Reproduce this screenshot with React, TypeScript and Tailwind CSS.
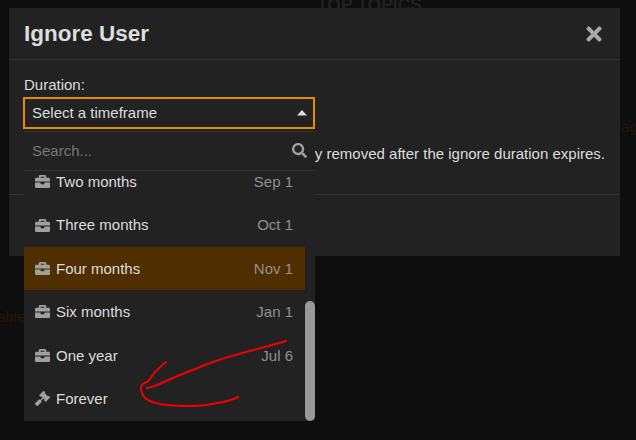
import { FaBriefcase, FaGavel, FaSearch, FaTimes } from "react-icons/fa";

const rows = [
  { label: "Two months", date: "Sep 1" },
  { label: "Three months", date: "Oct 1" },
  { label: "Four months", date: "Nov 1", active: true },
  { label: "Six months", date: "Jan 1" },
  { label: "One year", date: "Jul 6" },
  { label: "Forever", date: "", gavel: true },
];

export default function App() {
  return (
    <div className="relative w-[636px] h-[440px] overflow-hidden bg-[#0e0e0e] pt-2 pl-[9px] font-['Liberation_Sans',Arial,sans-serif] text-[#dddddd]">
      <div className="absolute left-[317px] top-[-8px] text-[17.5px] text-[#212121] font-bold">TOP TOPICS</div>
      <div className="absolute left-[618px] top-[116px] text-[15px] text-[#24170c]">lag</div>
      <div className="absolute left-[-3px] top-[306px] text-[15px] text-[#24170c]">able</div>

      <div className="relative w-[611px] h-[248px] bg-[#222222] flex flex-col">
        <div className="h-[52px] border-b border-[#333333] flex items-center justify-between pl-[15px] pr-[15px] shrink-0">
          <h1 className="text-[22.5px] font-bold text-[#dddddd]">Ignore User</h1>
          <FaTimes className="text-[#a8a8a8] w-[22px] h-[22px]" />
        </div>
        <div className="h-[135px] border-b border-[#333333] pt-4 px-[15px] shrink-0">
          <div className="text-[15px] leading-[18px]">Duration:</div>
          <div className="flex justify-end whitespace-nowrap text-[15px] leading-[18px] mt-[51px]">
            Automatically removed after the ignore duration expires.
          </div>
        </div>
      </div>

      <div className="absolute left-[23px] top-[97px] w-[292px] h-[32px] border-2 border-[#e68a00] bg-[#222222] flex items-center justify-between pl-[7px] pr-[6px] text-[15px]">
        <span className="pt-[1px]">Select a timeframe</span>
        <svg width="10" height="6" viewBox="0 0 10 6" className="fill-[#dddddd]"><path d="M5 0 L10 5.5 L0 5.5 Z" /></svg>
      </div>

      <div className="absolute left-[24px] top-[131px] w-[291px] h-[290px] bg-[#222222] flex flex-col overflow-hidden">
        <div className="h-[40px] border-y border-[#333333] flex items-center justify-between pl-2 pr-2 shrink-0">
          <span className="text-[15px] text-[#777777] pt-[1px]">Search...</span>
          <FaSearch className="text-[#a0a0a0] w-[15px] h-[15px] -mt-0.5" />
        </div>
        <div className="relative flex-1 overflow-hidden pr-[10px]">
          <div className="-mt-[11px]">
            {rows.map((r) => (
              <div
                key={r.label}
                className={`h-[43.4px] flex items-center justify-between pl-[11px] pr-[12px] ${r.active ? "bg-[#4f2e00]" : ""}`}
              >
                <span className="flex items-center gap-[6px] text-[15px]">
                  {r.gavel ? (
                    <FaGavel className="w-[15px] h-[15px] text-[#a0a0a0]" />
                  ) : (
                    <FaBriefcase className="w-[15px] h-[15px] text-[#a0a0a0]" />
                  )}
                  <span className="pt-[1px]">{r.label}</span>
                </span>
                <span className="text-[15px] text-[#909090] pt-[1px]">{r.date}</span>
              </div>
            ))}
          </div>
          <div className="absolute right-0 top-[130px] bottom-0 w-[10px] rounded-full bg-[#999999]" />
        </div>
      </div>

      <svg className="absolute left-0 top-0 pointer-events-none" width="636" height="440" fill="none" stroke="#f00000" strokeWidth="2" strokeLinecap="round" strokeLinejoin="round">
        <path d="M286 341 C262 348 236 354 213 362 C200 367 190 371 180 375 C170 379 164 382 157 385 C153 387 150 387.5 147 388" />
        <path d="M166 362 C161 366 158 369 155 372 C152 376 150 380 147 382 C144 383 142 384 142 385 C141 387 141 389 141 390 C142 394 144 397 145 398 C150 402 155 403 160 404 C170 406 180 406 190 406 C200 406 209 405 217 403 C225 402 232 400 238 397" />
      </svg>
    </div>
  );
}
